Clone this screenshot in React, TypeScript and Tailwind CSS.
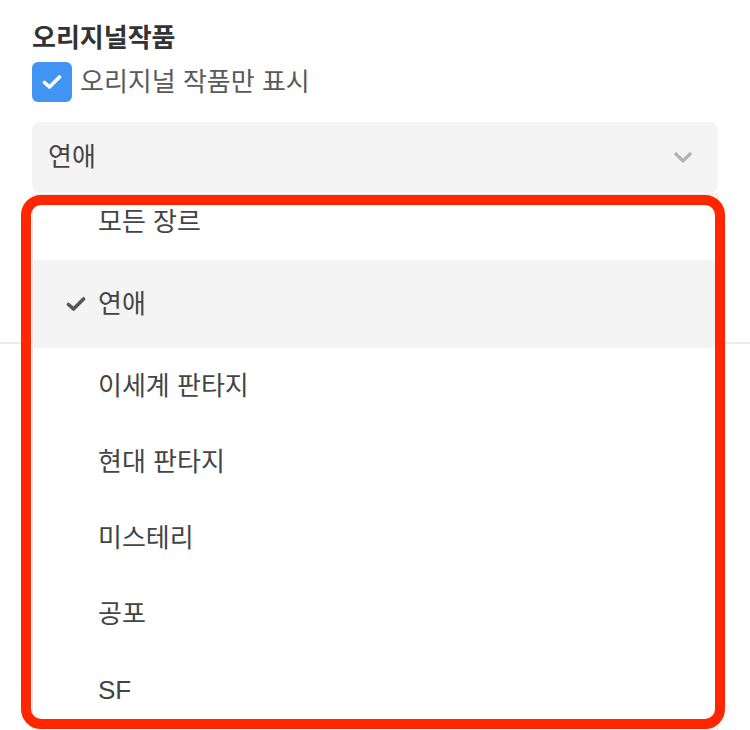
import React from 'react';

const genres = ['모든 장르', '연애', '이세계 판타지', '현대 판타지', '미스테리', '공포', 'SF'];

function CheckMark({ className }: { className?: string }) {
  return (
    <svg viewBox="0 0 20 16" className={className} fill="none">
      <polyline points="2.5,8.5 7.5,13 17.5,3" stroke="currentColor" strokeWidth="3.6" strokeLinecap="round" strokeLinejoin="round" />
    </svg>
  );
}

export default function App() {
  const selected = '연애';

  return (
    <div
      className="relative w-[750px] h-[730px] overflow-hidden bg-white"
      style={{ fontFamily: '"Liberation Sans", "Noto Sans CJK KR", sans-serif' }}
    >
      {/* filter section */}
      <div className="pl-8 pt-[22px]">
        <h2 className="text-[26px] leading-[32px] font-bold text-[#333333]">오리지널작품</h2>
        <label className="mt-2 flex items-center">
          <span className="flex h-10 w-10 items-center justify-center rounded-md bg-[#4294f4] text-white">
            <CheckMark className="h-[16px] w-[20px]" />
          </span>
          <span className="ml-2 text-[26px] leading-[40px] text-[#5a5a5a]">오리지널 작품만 표시</span>
        </label>
        <div className="mt-5 flex h-[71px] w-[686px] items-center justify-between rounded-lg bg-[#f4f4f4] pl-4 pr-[25px]">
          <span className="text-[26px] text-[#444444]">{selected}</span>
          <svg viewBox="0 0 20 13" className="h-[13px] w-[20px]" fill="none">
            <polyline points="2,2 10,10 18,2" stroke="#b3b3b3" strokeWidth="3.2" />
          </svg>
        </div>
      </div>
      <div className="mt-[149px] h-[2px] w-full bg-[#ececec]" />

      {/* open dropdown */}
      <div className="absolute left-8 top-[194px] h-[560px] w-[686px] overflow-hidden border border-[#e6e6e6] bg-white">
        <ul className="-mt-[11px]">
          {genres.map((g) => {
            const active = g === selected;
            return (
              <li
                key={g}
                className={`flex items-center pl-[33px] text-[26px] text-[#444444] ${active ? 'h-[88px] bg-[#f4f4f4]' : 'h-[76px]'}`}
              >
                <span className="mr-3 flex w-5 justify-center">
                  {active && <CheckMark className="h-[16px] w-[20px] text-[#555555]" />}
                </span>
                {g}
              </li>
            );
          })}
        </ul>
      </div>

      {/* annotation outline */}
      <div className="pointer-events-none absolute left-[21px] top-[195px] h-[534px] w-[704px] rounded-[20px] border-[10px] border-[#ff2600]" />
    </div>
  );
}
